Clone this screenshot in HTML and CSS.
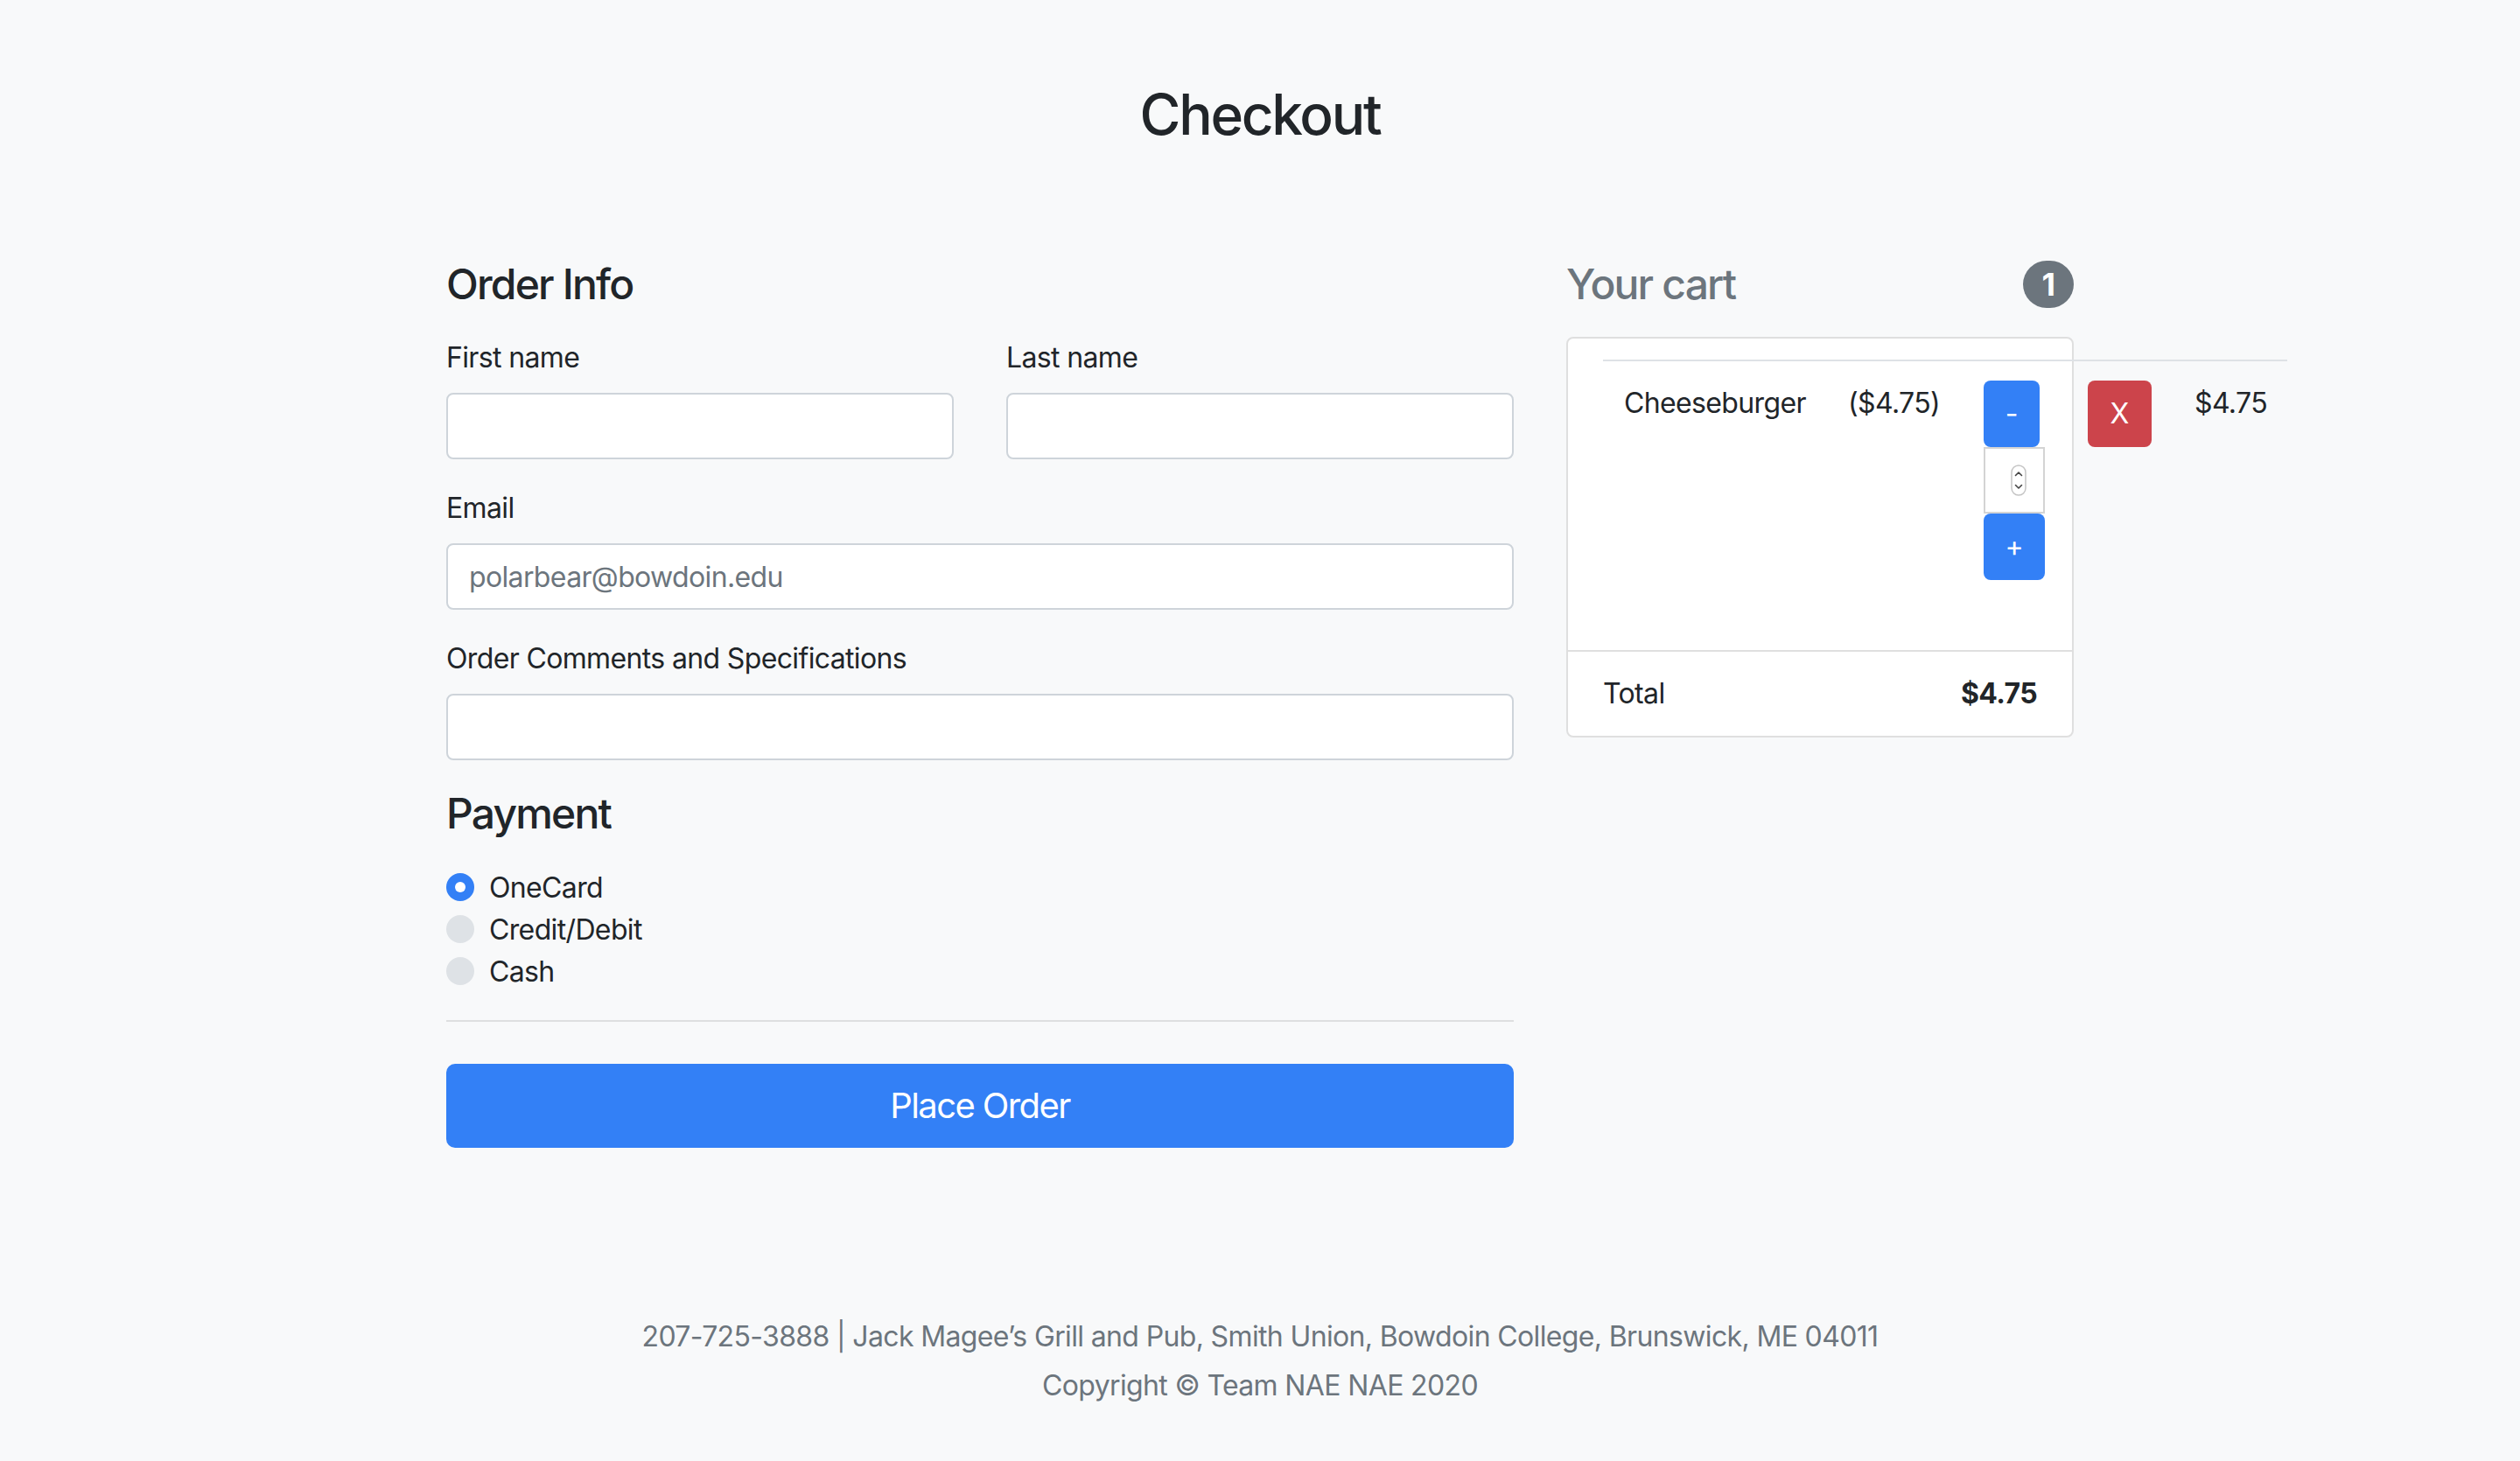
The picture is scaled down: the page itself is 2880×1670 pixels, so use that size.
FILE: index.html
```html
<!DOCTYPE html>
<html lang="en">
<head>
<meta charset="utf-8">
<title>Checkout</title>
<link rel="stylesheet" href="styles.css">
</head>
<body>
<div class="container">
  <header class="hero">
    <h2 class="hero-title">Checkout</h2>
  </header>

  <div class="row">
    <main class="col-main">
      <h4 class="section-title">Order Info</h4>
      <form class="order-form">
        <div class="name-row">
          <div class="field">
            <label class="field-label" for="first">First name</label>
            <input class="text-input" id="first" type="text">
          </div>
          <div class="field">
            <label class="field-label" for="last">Last name</label>
            <input class="text-input" id="last" type="text">
          </div>
        </div>
        <div class="field">
          <label class="field-label" for="email">Email</label>
          <input class="text-input" id="email" type="email" placeholder="polarbear@bowdoin.edu">
        </div>
        <div class="field">
          <label class="field-label" for="comments">Order Comments and Specifications</label>
          <input class="text-input" id="comments" type="text">
        </div>

        <h4 class="section-title">Payment</h4>
        <div class="radios">
          <div class="radio"><span class="radio-dot checked"></span><span>OneCard</span></div>
          <div class="radio"><span class="radio-dot"></span><span>Credit/Debit</span></div>
          <div class="radio"><span class="radio-dot"></span><span>Cash</span></div>
        </div>
        <hr class="divider">
        <button class="btn-order" type="button">Place Order</button>
      </form>
    </main>

    <aside class="col-side">
      <h4 class="cart-title"><span>Your cart</span><span class="badge">1</span></h4>
      <ul class="cart">
        <li class="cart-item">
          <div class="cart-line">
            <div class="cell cell-name">Cheeseburger</div>
            <div class="cell cell-price">($4.75)</div>
            <div class="cell cell-qty">
              <button class="btn-blue btn-minus" type="button">-</button>
              <div class="qty-box">
                <svg class="spinner" width="18" height="36" viewBox="0 0 18 36">
                  <rect x="1" y="1" width="16" height="34" rx="8" fill="#fff" stroke="#c4c4c4" stroke-width="1.5"/>
                  <path d="M5.5 12.5 L9 9 L12.5 12.5" fill="none" stroke="#444" stroke-width="1.6" stroke-linecap="round" stroke-linejoin="round"/>
                  <path d="M5.5 23.5 L9 27 L12.5 23.5" fill="none" stroke="#444" stroke-width="1.6" stroke-linecap="round" stroke-linejoin="round"/>
                </svg>
              </div>
              <button class="btn-blue btn-plus" type="button">+</button>
            </div>
            <div class="cell cell-remove"><button class="btn-red" type="button">X</button></div>
            <div class="cell cell-sum">$4.75</div>
          </div>
        </li>
        <li class="cart-total">
          <span>Total</span>
          <strong>$4.75</strong>
        </li>
      </ul>
    </aside>
  </div>

  <footer class="footer">
    <p class="footer-line">207-725-3888 | Jack Magee’s Grill and Pub, Smith Union, Bowdoin College, Brunswick, ME 04011</p>
    <p class="footer-line">Copyright © Team NAE NAE 2020</p>
  </footer>
</div>
</body>
</html>
```

FILE: styles.css
```css
* { box-sizing: border-box; }

body {
  margin: 0;
  background: #f8f9fa;
  color: #212529;
  font-family: Inter, "Noto Sans", sans-serif;
  font-size: 32px;
  line-height: 1.5;
  letter-spacing: -0.02em;
}

.container {
  width: 1920px;
  margin: 0 auto;
  padding: 0 30px;
}

.hero {
  padding-top: 93px;
  padding-bottom: 126px;
  text-align: center;
}

.hero-title {
  margin: 0;
  font-size: 64px;
  font-weight: 500;
  line-height: 1.2;
  letter-spacing: -0.036em;
}

.row {
  display: flex;
  gap: 60px;
}

.col-main { width: 1220px; }
.col-side { width: 580px; }

.section-title {
  margin: 0 0 32px;
  font-size: 48px;
  font-weight: 500;
  line-height: 1.2;
  letter-spacing: -0.038em;
}

.order-form { margin: 0; }

.name-row {
  display: flex;
  gap: 60px;
}
.name-row .field { flex: 1; }

.field { margin-bottom: 32px; }

.field-label {
  display: block;
  margin-bottom: 16px;
}

.text-input {
  display: block;
  width: 100%;
  height: 76px;
  padding: 12px 24px;
  font: inherit;
  letter-spacing: -0.02em;
  color: #495057;
  background: #fff;
  border: 2px solid #ced4da;
  border-radius: 8px;
  outline: none;
}
.text-input::placeholder { color: #6c757d; }

.radios { margin: 30px 0 31px; }

.radio {
  display: flex;
  align-items: flex-start;
  gap: 17px;
}

.radio-dot {
  flex: none;
  width: 32px;
  height: 32px;
  margin-top: 7px;
  border-radius: 50%;
  background: #dee2e6;
  display: flex;
  align-items: center;
  justify-content: center;
}
.radio-dot.checked { background: #3380f6; }
.radio-dot.checked::after {
  content: "";
  width: 12px;
  height: 12px;
  border-radius: 50%;
  background: #fff;
}

.divider {
  margin: 31px 0 48px;
  border: 0;
  border-top: 2px solid rgba(0, 0, 0, 0.1);
  height: 0;
}

.btn-order {
  display: block;
  width: 100%;
  height: 96px;
  padding: 0;
  font: inherit;
  font-size: 40px;
  letter-spacing: -0.04em;
  color: #fff;
  background: #3380f6;
  border: 0;
  border-radius: 10px;
}

.cart-title {
  display: flex;
  justify-content: space-between;
  align-items: center;
  margin: 0 0 32px;
  font-size: 48px;
  font-weight: 500;
  line-height: 1.2;
  letter-spacing: -0.038em;
  color: #6c757d;
}

.badge {
  font-size: 36px;
  font-weight: 700;
  line-height: 1;
  letter-spacing: 0;
  color: #fff;
  background: #6c757d;
  padding: 9px 21px;
  border-radius: 999px;
}

.cart {
  list-style: none;
  margin: 0;
  padding: 0;
  background: #fff;
  border: 2px solid #dfdfdf;
  border-radius: 8px;
}

.cart-item { padding: 24px 40px; }

.cart-line {
  display: flex;
  width: 782px;
  border-top: 2px solid #dee2e6;
  margin-bottom: 32px;
}

.cell {
  flex: none;
  padding: 24px;
}
.cell-name { width: 256px; }
.cell-price { width: 155px; }
.cell-qty {
  width: 119px;
  display: flex;
  flex-direction: column;
  align-items: flex-start;
  padding-top: 22px;
}
.cell-remove { width: 122px; padding-top: 22px; }
.cell-sum { width: 130px; }

.btn-blue, .btn-red {
  height: 76px;
  padding: 0;
  font: inherit;
  color: #fff;
  border: 0;
  border-radius: 8px;
}
.btn-blue { background: #3380f6; }
.btn-red { background: #cc444b; width: 73px; }
.btn-minus { width: 64px; }
.btn-plus { width: 70px; }

.qty-box {
  width: 70px;
  height: 76px;
  background: #fff;
  border: 2px solid #d4d4d4;
  display: flex;
  align-items: center;
  justify-content: center;
  padding-left: 10px;
}

.cart-total {
  display: flex;
  justify-content: space-between;
  padding: 24px 40px;
  border-top: 2px solid #dfdfdf;
}
.cart-total strong { font-weight: 700; }

.footer {
  margin: 96px 0;
  padding-top: 96px;
  text-align: center;
  color: #6c757d;
}

.footer-line { margin: 0 0 8px; }
```
